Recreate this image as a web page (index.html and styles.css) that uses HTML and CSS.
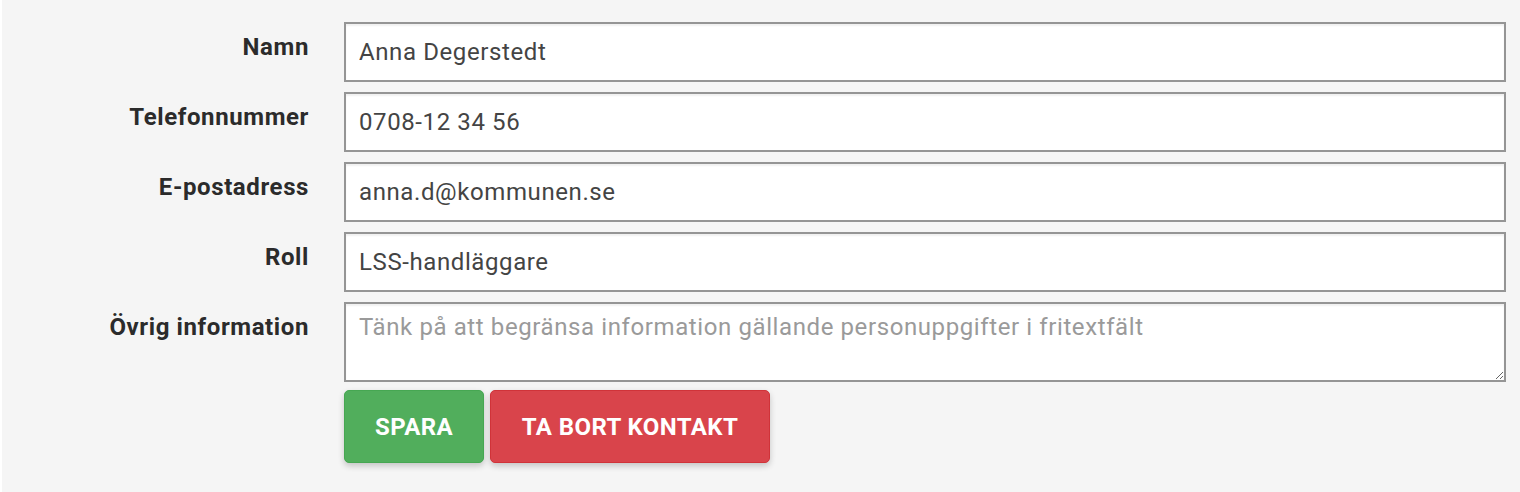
FILE: index.html
```html
<!DOCTYPE html>
<html lang="sv">
<head>
<meta charset="utf-8">
<title>Kontakt</title>
<link rel="stylesheet" href="styles.css">
</head>
<body>
<div class="page">
  <form class="form">
    <label class="label" for="namn">Namn</label>
    <input class="field" id="namn" type="text" value="Anna Degerstedt">
    <label class="label" for="tel">Telefonnummer</label>
    <input class="field" id="tel" type="text" value="0708-12 34 56">
    <label class="label" for="epost">E-postadress</label>
    <input class="field" id="epost" type="text" value="anna.d@kommunen.se">
    <label class="label" for="roll">Roll</label>
    <input class="field" id="roll" type="text" value="LSS-handläggare">
    <label class="label" for="info">Övrig information</label>
    <textarea class="field area" id="info" placeholder="Tänk på att begränsa information gällande personuppgifter i fritextfält"></textarea>
    <div class="actions">
      <button type="button" class="btn btn-save">SPARA</button>
      <button type="button" class="btn btn-delete">TA BORT KONTAKT</button>
    </div>
  </form>
</div>
</body>
</html>
```

FILE: styles.css
```css
html, body {
  margin: 0;
  padding: 0;
  background: #ffffff;
}
body {
  font-family: Roboto, "Liberation Sans", Arial, sans-serif;
  height: 492px;
}
.page {
  margin-left: 2px;
  background: #f5f5f5;
  height: 492px;
  padding-top: 22px;
  box-sizing: border-box;
}
.form {
  display: grid;
  grid-template-columns: 306px 1162px;
  column-gap: 36px;
  row-gap: 10px;
  align-items: start;
}
.label {
  text-align: right;
  font-weight: 700;
  font-size: 24px;
  letter-spacing: 0.6px;
  line-height: 26px;
  color: #2b2b2b;
  padding-top: 12px;
  margin-right: -1px;
}
.field {
  box-sizing: border-box;
  height: 60px;
  width: 1162px;
  margin: 0;
  border: 2px solid #959595;
  border-radius: 0;
  background: #fff;
  box-shadow: inset 0 2px 2px rgba(0,0,0,0.06);
  padding: 0 13px;
  font-family: Roboto, "Liberation Sans", Arial, sans-serif;
  font-size: 24px;
  letter-spacing: 0.6px;
  color: #444;
  outline: none;
}
.area {
  height: 80px;
  padding: 9px 13px;
  line-height: 28px;
  resize: vertical;
  display: block;
}
.area::placeholder {
  color: #9a9a9a;
  opacity: 1;
}
.actions {
  grid-column: 2;
  display: flex;
  gap: 6px;
  margin-top: -2px;
}
.btn {
  box-sizing: border-box;
  height: 73px;
  border-radius: 5px;
  font-family: Roboto, "Liberation Sans", Arial, sans-serif;
  font-weight: 700;
  font-size: 24px;
  letter-spacing: 0.4px;
  color: #fff;
  padding: 0 20px;
  box-shadow: 0 3px 6px rgba(0,0,0,0.2);
  cursor: pointer;
}
.btn-save {
  width: 140px;
  background: #51ae5c;
  border: 1px solid #46a752;
}
.btn-delete {
  width: 280px;
  background: #d9444b;
  border: 1px solid #d03339;
}
```
